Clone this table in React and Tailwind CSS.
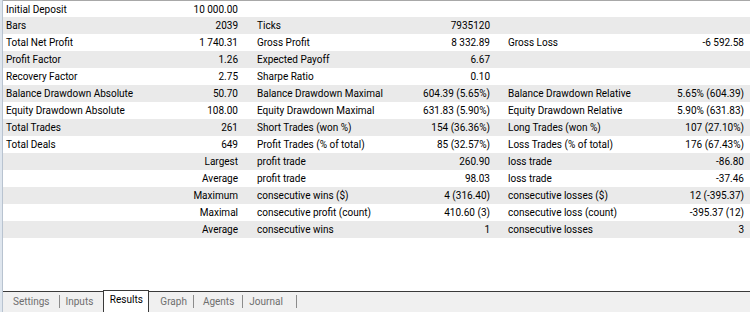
import React from "react";

const rows = [
  ["Initial Deposit", "10 000.00", "", "", "", ""],
  ["Bars", "2039", "Ticks", "7935120", "", ""],
  ["Total Net Profit", "1 740.31", "Gross Profit", "8 332.89", "Gross Loss", "-6 592.58"],
  ["Profit Factor", "1.26", "Expected Payoff", "6.67", "", ""],
  ["Recovery Factor", "2.75", "Sharpe Ratio", "0.10", "", ""],
  ["Balance Drawdown Absolute", "50.70", "Balance Drawdown Maximal", "604.39 (5.65%)", "Balance Drawdown Relative", "5.65% (604.39)"],
  ["Equity Drawdown Absolute", "108.00", "Equity Drawdown Maximal", "631.83 (5.90%)", "Equity Drawdown Relative", "5.90% (631.83)"],
  ["Total Trades", "261", "Short Trades (won %)", "154 (36.36%)", "Long Trades (won %)", "107 (27.10%)"],
  ["Total Deals", "649", "Profit Trades (% of total)", "85 (32.57%)", "Loss Trades (% of total)", "176 (67.43%)"],
  ["", "Largest", "profit trade", "260.90", "loss trade", "-86.80"],
  ["", "Average", "profit trade", "98.03", "loss trade", "-37.46"],
  ["", "Maximum", "consecutive wins ($)", "4 (316.40)", "consecutive losses ($)", "12 (-395.37)"],
  ["", "Maximal", "consecutive profit (count)", "410.60 (3)", "consecutive loss (count)", "-395.37 (12)"],
  ["", "Average", "consecutive wins", "1", "consecutive losses", "3"],
];

function Sep({ className }) {
  return <span className={"block w-px h-[13px] bg-[#8c8c8c] " + className} />;
}

export default function App() {
  return (
    <div className="w-[750px] h-[312px] flex bg-white text-[10px] text-black overflow-hidden font-['Roboto','Liberation_Sans',sans-serif]">
      {/* window edge */}
      <div className="w-[3px] h-full flex">
        <div className="w-[2px] h-full bg-[#dfe6ee]" />
        <div className="w-px h-full bg-[#b8c3d0]" />
      </div>

      <div className="flex-1 flex flex-col">
        {/* results table */}
        <div className="flex-1">
          {rows.map((r, i) => (
            <div
              key={i}
              className={
                "flex h-[17px] pt-px leading-[16px] whitespace-nowrap " +
                (i % 2 === 1 ? "bg-[#eaeaea]" : "bg-white") +
                (i === 0 ? " border-t border-[#a8a8a8]" : "")
              }
            >
              <div className="w-[157px] pl-[3px]">{r[0]}</div>
              <div className="w-[85px] pr-[7px] text-right">{r[1]}</div>
              <div className="w-[145px] pl-[12px]">{r[2]}</div>
              <div className="w-[107px] pr-[7px] text-right">{r[3]}</div>
              <div className="w-[143px] pl-[11px]">{r[4]}</div>
              <div className="flex-1 pr-[6px] text-right">{r[5]}</div>
            </div>
          ))}
        </div>

        {/* bottom tabs */}
        <div className="h-[21px] border-t border-[#3a3a3a] bg-[#f0f0f0] flex items-start text-[#6e6e6e] whitespace-nowrap">
          <div className="flex items-center h-[20px] pb-[2px]">
            <span className="ml-[10px]">Settings</span>
            <Sep className="ml-[9px]" />
            <span className="ml-[6px]">Inputs</span>
          </div>
          <div className="ml-[10px] -mt-[2px] w-[46px] h-[22px] bg-white border border-b-0 border-[#3a3a3a] text-black text-center leading-[17px]">
            Results
          </div>
          <div className="flex items-center h-[20px] pb-[2px]">
            <span className="ml-[11px]">Graph</span>
            <Sep className="ml-[6px]" />
            <span className="ml-[9px]">Agents</span>
            <Sep className="ml-[8px]" />
            <span className="ml-[6px]">Journal</span>
            <Sep className="ml-[13px]" />
          </div>
        </div>
      </div>
    </div>
  );
}
